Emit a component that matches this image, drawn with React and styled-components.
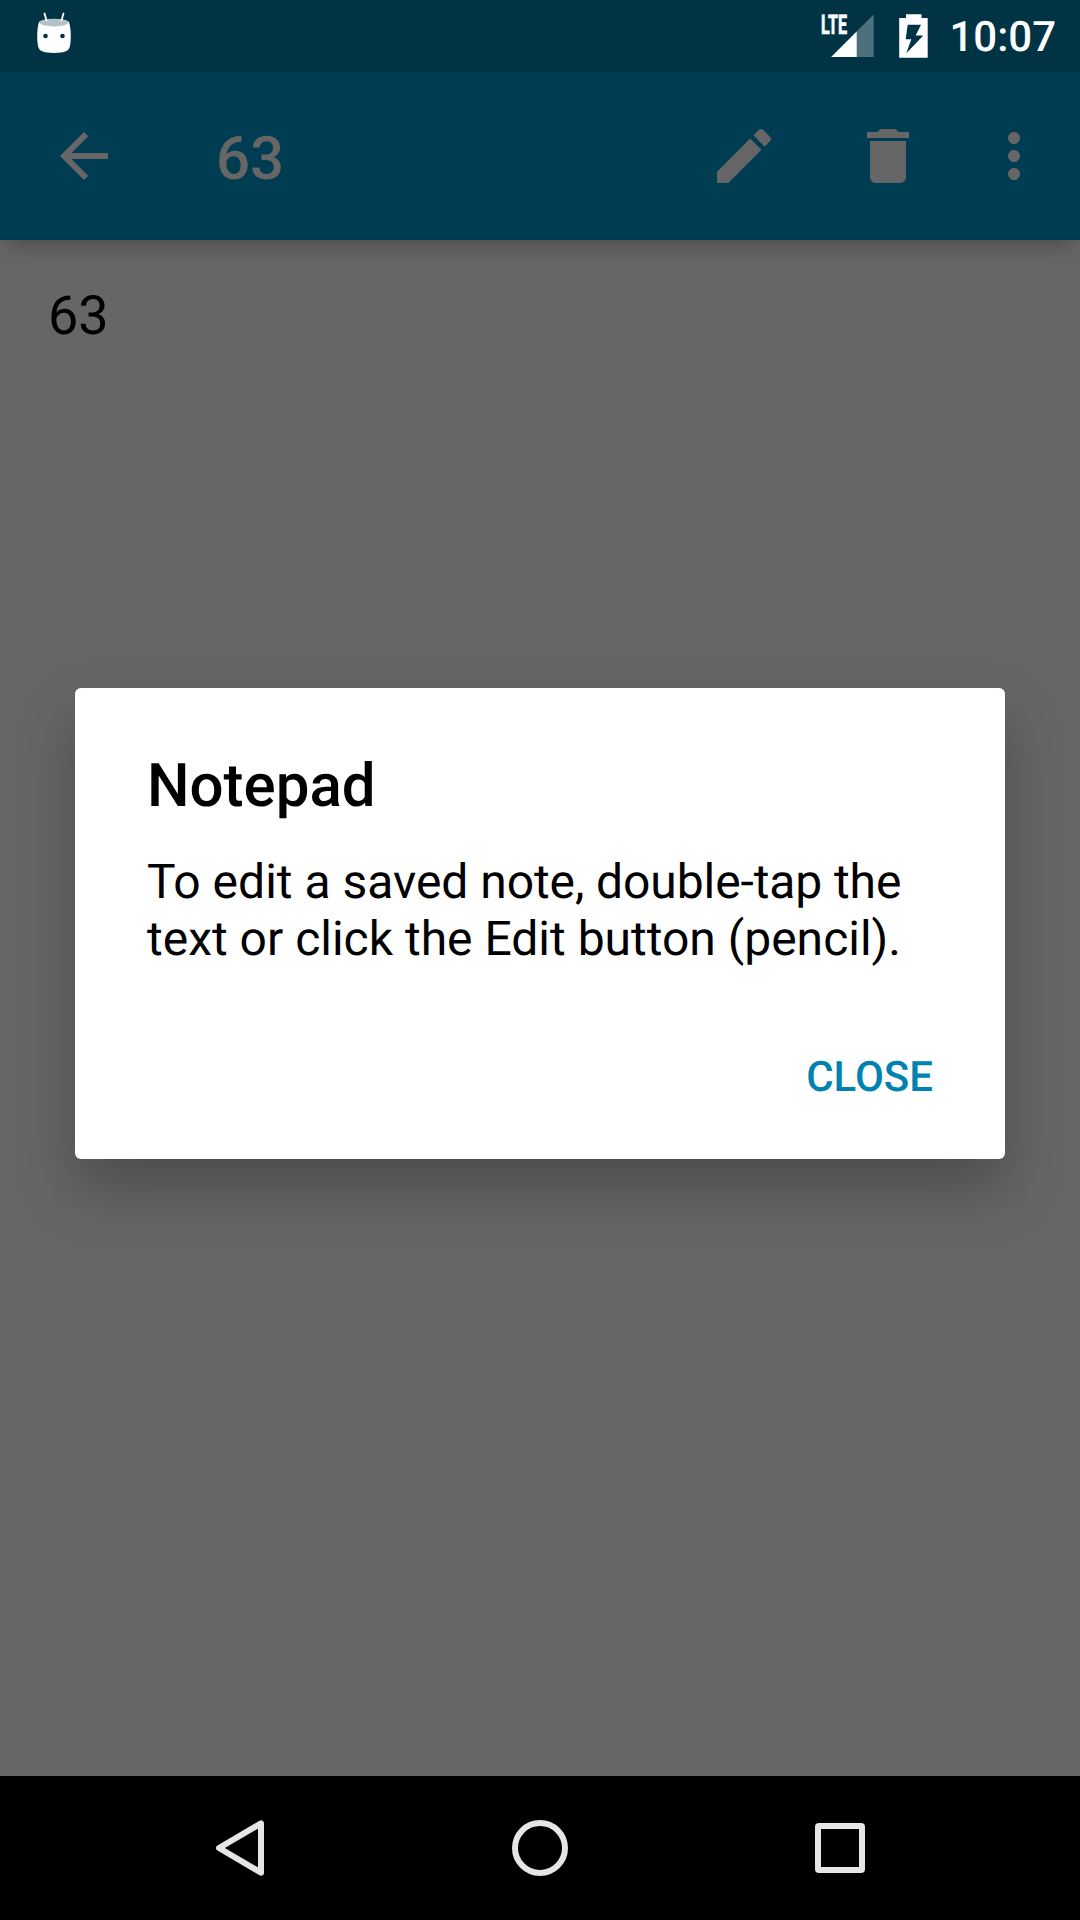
import React from "react";
import styled, { createGlobalStyle } from "styled-components";

const GlobalStyle = createGlobalStyle`
  * { box-sizing: border-box; }
  body {
    margin: 0;
    font-family: Roboto, "Noto Sans", sans-serif;
    text-rendering: geometricPrecision;
    background: #000;
  }
  svg { display: block; flex: none; }
`;

const Screen = styled.div`
  position: relative;
  display: flex;
  flex-direction: column;
  width: 1080px;
  height: 1920px;
  overflow: hidden;
  background: #666;
`;

const StatusBar = styled.header`
  display: flex;
  align-items: center;
  justify-content: space-between;
  height: 72px;
  padding: 0 24px 0 36px;
  background: #003344;
`;

const StatusIcons = styled.div`
  display: flex;
  align-items: center;
`;

const Signal = styled.div`
  position: relative;
  width: 54px;
  height: 72px;
  margin-right: 25px;
`;

const NetworkType = styled.span`
  position: absolute;
  left: 1px;
  top: 9px;
  color: #fff;
  font-size: 27px;
  font-weight: 700;
  line-height: 32px;
  transform: scaleX(0.6);
  transform-origin: left;
  -webkit-text-stroke: 0.7px #fff;
`;

const Clock = styled.time`
  margin-left: 20px;
  color: #fff;
  font-size: 42px;
  font-weight: 500;
  line-height: 50px;
  padding-top: 4px;
`;

const AppBar = styled.nav`
  display: flex;
  align-items: center;
  height: 168px;
  padding: 0 30px 0 48px;
  background: #003d52;
  box-shadow: 0 12px 18px -6px rgba(0, 0, 0, 0.24);
`;

const IconButton = styled.button`
  display: flex;
  padding: 0;
  margin-left: ${(p) => p.$gap || 0}px;
  border: 0;
  background: none;
  color: #666;
`;

const BarTitle = styled.h1`
  flex: 1;
  margin: 6px 0 0 96px;
  color: #666;
  font-size: 60px;
  font-weight: 500;
  line-height: 70px;
`;

const Note = styled.main`
  flex: 1;
  padding: 45px 48px;
  color: #000;
  font-size: 54px;
  line-height: 64px;
`;

const NavBar = styled.footer`
  display: flex;
  align-items: center;
  justify-content: center;
  gap: 228px;
  height: 144px;
  background: #000;
`;

const DialogLayer = styled.div`
  position: absolute;
  inset: 72px 0 144px;
  display: flex;
  align-items: center;
  justify-content: center;
  padding-bottom: 1px;
`;

const Dialog = styled.section`
  display: flex;
  flex-direction: column;
  width: 930px;
  height: 471px;
  padding: 63px 72px 0;
  border-radius: 6px;
  background: #fff;
  box-shadow: 0 30px 60px rgba(0, 0, 0, 0.25);
`;

const DialogTitle = styled.h2`
  margin: 0;
  font-size: 60px;
  font-weight: 500;
  line-height: 70px;
`;

const DialogText = styled.p`
  margin: 32px -20px 0 0;
  font-size: 48px;
  line-height: 57px;
`;

const Tight = styled.span`
  letter-spacing: -0.1px;
`;

const DialogButton = styled.button`
  align-self: flex-end;
  margin-top: 86px;
  padding: 0;
  border: 0;
  background: none;
  color: #0083b0;
  font: 500 42px/50px Roboto, "Noto Sans", sans-serif;
  text-rendering: inherit;
`;

const Icon = ({ d }) => (
  <svg width="72" height="72" viewBox="0 0 24 24" fill="currentColor">
    <path d={d} />
  </svg>
);

const icons = {
  back: "M20 11H7.83l5.59-5.59L12 4l-8 8 8 8 1.41-1.41L7.83 13H20v-2z",
  edit: "M3 17.25V21h3.75L17.81 9.94l-3.75-3.75L3 17.25zM20.71 7.04c.39-.39.39-1.02 0-1.41l-2.34-2.34c-.39-.39-1.02-.39-1.41 0l-1.83 1.83 3.75 3.75 1.83-1.83z",
  trash: "M6 19c0 1.1.9 2 2 2h8c1.1 0 2-.9 2-2V7H6v12zM19 4h-3.5l-1-1h-5l-1 1H5v2h14V4z",
  more: "M12 8c1.1 0 2-.9 2-2s-.9-2-2-2-2 .9-2 2 .9 2 2 2zm0 2c-1.1 0-2 .9-2 2s.9 2 2 2 2-.9 2-2-.9-2-2-2zm0 6c-1.1 0-2 .9-2 2s.9 2 2 2 2-.9 2-2-.9-2-2-2z",
};

const RobotIcon = () => (
  <svg width="36" height="72" viewBox="36 0 36 72">
    <path
      d="M39 22C43 18 65 18 69 22C71 28 71.3 39 70 46C69 51 65 52.9 54 52.9C43 52.9 39 51 38 46C36.700 39 37 28 39 22Z"
      fill="#fff"
    />
    <ellipse cx="54" cy="22.600" rx="14.300" ry="3.900" fill="#b3c2c7" />
    <path d="M44.500 13.500L46.500 20.500M63.500 13.500L61.500 20.500" stroke="#fff" strokeWidth="1.800" strokeLinecap="round" />
    <circle cx="45.500" cy="36" r="2.300" fill="#003344" />
    <circle cx="62.500" cy="36" r="2.300" fill="#003344" />
  </svg>
);

const SignalIcon = () => (
  <svg width="54" height="72" viewBox="820 0 54 72">
    <path d="M873.700 14.500V57H831.200Z" fill="#4d707c" />
    <path d="M856.700 31.500V57H831.200Z" fill="#fff" />
  </svg>
);

const BatteryIcon = () => (
  <svg width="30" height="72" viewBox="899 0 30 72">
    <path
      fillRule="evenodd"
      fill="#fff"
      d="M906 14.300H921.500V18H927.700V57.700H899.200V18H906ZM907.700 24.700L905.700 39.300H911.300L906.300 53.300L923.300 35.500H915.700L921 24.700Z"
    />
  </svg>
);

const NavIcon = ({ children }) => (
  <svg width="72" height="72" viewBox="0 0 72 72" fill="none" stroke="#e6e6e6" strokeWidth="6" strokeLinejoin="round">
    {children}
  </svg>
);

export default function App() {
  return (
    <Screen>
      <GlobalStyle />
      <StatusBar>
        <RobotIcon />
        <StatusIcons>
          <Signal>
            <SignalIcon />
            <NetworkType>LTE</NetworkType>
          </Signal>
          <BatteryIcon />
          <Clock>10:07</Clock>
        </StatusIcons>
      </StatusBar>
      <AppBar>
        <IconButton aria-label="Back"><Icon d={icons.back} /></IconButton>
        <BarTitle>63</BarTitle>
        <IconButton aria-label="Edit"><Icon d={icons.edit} /></IconButton>
        <IconButton aria-label="Delete" $gap={72}><Icon d={icons.trash} /></IconButton>
        <IconButton aria-label="More options" $gap={54}><Icon d={icons.more} /></IconButton>
      </AppBar>
      <Note>63</Note>
      <NavBar>
        <NavIcon><path d="M15 36L57 11.300V60.700Z" /></NavIcon>
        <NavIcon><circle cx="36" cy="36" r="25" /></NavIcon>
        <NavIcon><rect x="14" y="14" width="44" height="44" rx="1" /></NavIcon>
      </NavBar>
      <DialogLayer>
        <Dialog role="dialog" aria-label="Notepad">
          <DialogTitle>Notepad</DialogTitle>
          <DialogText>
            To edit a saved <Tight>note, double-tap the</Tight>
            <br />
            text or click the Edit button (pencil).
          </DialogText>
          <DialogButton>CLOSE</DialogButton>
        </Dialog>
      </DialogLayer>
    </Screen>
  );
}
